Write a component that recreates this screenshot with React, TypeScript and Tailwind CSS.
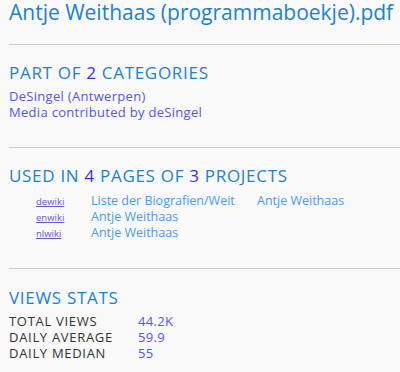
const FONT = "font-['Open_Sans',sans-serif]";

const PAGES = [
  { wiki: 'dewiki', pages: ['Liste der Biografien/Weit', 'Antje Weithaas'] },
  { wiki: 'enwiki', pages: ['Antje Weithaas'] },
  { wiki: 'nlwiki', pages: ['Antje Weithaas'] },
];

const STATS = [
  { label: 'TOTAL VIEWS', value: '44.2K' },
  { label: 'DAILY AVERAGE', value: '59.9' },
  { label: 'DAILY MEDIAN', value: '55' },
];

function Heading({ children }: { children: React.ReactNode }) {
  return (
    <h2 className="text-[17px] leading-[22px] tracking-[0.7px] text-[#1b82d1] uppercase">{children}</h2>
  );
}

function Num({ children }: { children: React.ReactNode }) {
  return <span className="text-[#3333dd]">{children}</span>;
}

export default function App() {
  return (
    <div className={`${FONT} bg-[#f9f9f9] w-[400px] h-[372px] overflow-hidden pl-[9px]`}>
      <h1 className="text-[21px] leading-[25px] text-[#1b82d1] whitespace-nowrap">
        Antje Weithaas (programmaboekje).pdf
      </h1>
      <hr className="mt-[19px] border-t border-[#cccccc]" />

      {/* Categories */}
      <section className="pt-[17px] pb-[27px]">
        <Heading>
          Part of <Num>2</Num> categories
        </Heading>
        <ul className="mt-[4px] text-[13px] leading-[16px] tracking-[0.3px] text-[#5555ee]">
          <li>DeSingel (Antwerpen)</li>
          <li>Media contributed by deSingel</li>
        </ul>
      </section>
      <hr className="border-t border-[#cccccc]" />

      {/* Usage */}
      <section className="pt-[17px] pb-[27px]">
        <Heading>
          Used in <Num>4</Num> pages of <Num>3</Num> projects
        </Heading>
        <div className="mt-[6px] pl-[27px] text-[12.5px] leading-[16px]">
          {PAGES.map((row) => (
            <div key={row.wiki} className="flex items-baseline h-[16px]">
              <span className="w-[55px] shrink-0 text-[9.5px] leading-[10px] text-[#6655dd] underline">
                {row.wiki}
              </span>
              {row.pages.map((p) => (
                <span key={p} className="w-[166px] shrink-0 text-[#4499ff] whitespace-nowrap">
                  {p}
                </span>
              ))}
            </div>
          ))}
        </div>
      </section>
      <hr className="border-t border-[#cccccc]" />

      {/* Views */}
      <section className="pt-[18px]">
        <Heading>Views stats</Heading>
        <div className="mt-[4px] text-[13px] leading-[16px]">
          {STATS.map((s) => (
            <div key={s.label} className="flex">
              <span className="w-[129px] tracking-[0.7px] text-[#333333]">{s.label}</span>
              <span className="tracking-[0.3px] text-[#5555ee]">{s.value}</span>
            </div>
          ))}
        </div>
      </section>
    </div>
  );
}
